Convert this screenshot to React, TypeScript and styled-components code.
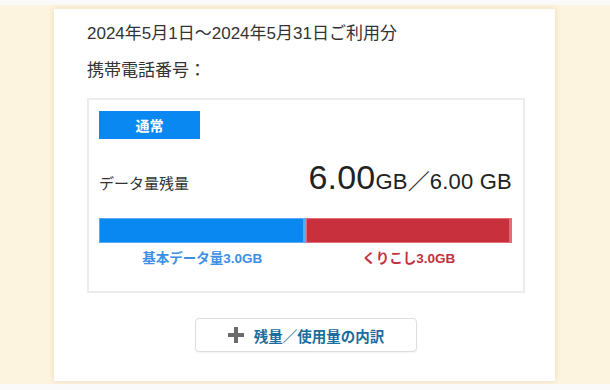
import React from 'react';
import styled, { createGlobalStyle } from 'styled-components';

const GlobalStyle = createGlobalStyle`
  body {
    margin: 0;
    background: #fafafa;
    font-family: "Liberation Sans", "Noto Sans CJK JP", sans-serif;
    color: #333;
  }
`;

const Page = styled.div`
  margin-top: 5px;
  height: 379px;
  background: #fdf4e0;
  padding-top: 4px;
  box-sizing: border-box;
`;

const Card = styled.section`
  margin-left: 54px;
  width: 501px;
  height: 372px;
  box-sizing: border-box;
  background: #fff;
  box-shadow: 0 0 6px rgba(200, 170, 110, 0.35);
  padding: 13px 30px 0 33px;
`;

const Line = styled.div<{ $gap?: number }>`
  font-size: 17px;
  line-height: 24px;
  margin-top: ${(p) => p.$gap ?? 0}px;
  color: #333;
`;

const DataBox = styled.div`
  margin-top: 15px;
  border: 2px solid #ececec;
  padding: 11px 11px 23px 10px;
`;

const Badge = styled.div`
  width: 101px;
  height: 28px;
  background: #0a88f2;
  color: #fff;
  font-weight: bold;
  font-size: 14px;
  display: flex;
  align-items: center;
  justify-content: center;
`;

const AmountRow = styled.div`
  display: flex;
  justify-content: space-between;
  align-items: baseline;
  margin-top: 19px;
`;

const AmountLabel = styled.span`
  font-size: 15px;
`;

const Amount = styled.span`
  font-size: 22px;
  color: #222;
  letter-spacing: 0.2px;
`;

const BigNumber = styled.span`
  font-size: 34px;
`;

const Bar = styled.div`
  display: flex;
  height: 25px;
  margin-top: 21px;
`;

const Segment = styled.div<{ $color: string; $edge: string }>`
  flex: 1;
  background: ${(p) => p.$color};
  box-shadow: inset 0 0 0 1px ${(p) => p.$edge};
  border-right: 2px solid ${(p) => p.$edge};
`;

const Legend = styled.div`
  display: flex;
  margin-top: 7px;
`;

const LegendItem = styled.div<{ $color: string }>`
  flex: 1;
  text-align: center;
  font-size: 13.5px;
  line-height: 18px;
  font-weight: bold;
  color: ${(p) => p.$color};
`;

const ButtonRow = styled.div`
  display: flex;
  justify-content: center;
  margin-top: 25px;
`;

const DetailButton = styled.button`
  width: 222px;
  height: 34px;
  display: flex;
  align-items: center;
  justify-content: center;
  gap: 10px;
  background: #fff;
  border: 1px solid #dedede;
  border-radius: 4px;
  box-shadow: 0 1px 2px rgba(0, 0, 0, 0.05);
  font-family: inherit;
  font-size: 14.5px;
  font-weight: bold;
  color: #1b6d9e;
  cursor: pointer;
  padding: 0;
`;

const PlusIcon = () => (
  <svg width="16" height="16" viewBox="0 0 16 16">
    <rect x="6" y="0" width="4" height="16" fill="#6b6b6b" />
    <rect x="0" y="6" width="16" height="4" fill="#6b6b6b" />
  </svg>
);

const App: React.FC = () => (
  <>
    <GlobalStyle />
    <Page>
      <Card>
        <Line>2024年5月1日～2024年5月31日ご利用分</Line>
        <Line $gap={13}>携帯電話番号：</Line>
        <DataBox>
          <Badge>通常</Badge>
          <AmountRow>
            <AmountLabel>データ量残量</AmountLabel>
            <Amount>
              <BigNumber>6.00</BigNumber>GB／6.00 GB
            </Amount>
          </AmountRow>
          <Bar>
            <Segment $color="#0a88f2" $edge="#5aaaf3" />
            <Segment $color="#c9303d" $edge="#e06c76" />
          </Bar>
          <Legend>
            <LegendItem $color="#3d8fe6">基本データ量3.0GB</LegendItem>
            <LegendItem $color="#c0313d">くりこし3.0GB</LegendItem>
          </Legend>
        </DataBox>
        <ButtonRow>
          <DetailButton>
            <PlusIcon />
            残量／使用量の内訳
          </DetailButton>
        </ButtonRow>
      </Card>
    </Page>
  </>
);

export default App;
